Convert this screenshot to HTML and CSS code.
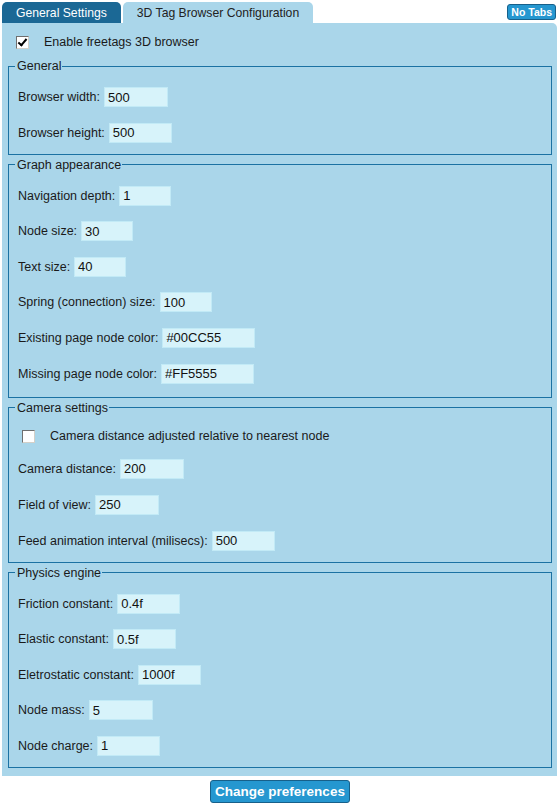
FILE: index.html
```html
<!DOCTYPE html>
<html lang="en">
<head>
    <meta charset="UTF-8">
    <title>Freetags - 3D Tag Browser Configuration</title>
    <link rel="stylesheet" href="styles.css">
</head>
<body>
    <!-- Tab bar -->
    <div class="tab-bar">
        <ul class="tabs">
            <li class="tab">General Settings</li>
            <li class="tab tab-active">3D Tag Browser Configuration</li>
        </ul>
        <button type="button" class="no-tabs">No Tabs</button>
    </div>

    <form class="prefs-form">
        <div class="panel">
            <div class="check-row">
                <input type="checkbox" id="enable-browser" checked>
                <label for="enable-browser">Enable freetags 3D browser</label>
            </div>

            <fieldset class="group">
                <legend>General</legend>
                <div class="row">
                    <label for="browser-width">Browser width:</label>
                    <input type="text" id="browser-width" class="field" value="500">
                </div>
                <div class="row">
                    <label for="browser-height">Browser height:</label>
                    <input type="text" id="browser-height" class="field field-62" value="500">
                </div>
            </fieldset>

            <fieldset class="group group-graph">
                <legend>Graph appearance</legend>
                <div class="row">
                    <label for="nav-depth">Navigation depth:</label>
                    <input type="text" id="nav-depth" class="field field-small" value="1">
                </div>
                <div class="row">
                    <label for="node-size">Node size:</label>
                    <input type="text" id="node-size" class="field field-small" value="30">
                </div>
                <div class="row">
                    <label for="text-size">Text size:</label>
                    <input type="text" id="text-size" class="field field-small" value="40">
                </div>
                <div class="row">
                    <label for="spring-size">Spring (connection) size:</label>
                    <input type="text" id="spring-size" class="field field-small" value="100">
                </div>
                <div class="row">
                    <label for="existing-color">Existing page node color:</label>
                    <input type="text" id="existing-color" class="field field-wide" value="#00CC55">
                </div>
                <div class="row">
                    <label for="missing-color">Missing page node color:</label>
                    <input type="text" id="missing-color" class="field field-wide" value="#FF5555">
                </div>
            </fieldset>

            <fieldset class="group group-camera">
                <legend>Camera settings</legend>
                <div class="check-row check-row-inner">
                    <input type="checkbox" id="camera-relative">
                    <label for="camera-relative">Camera distance adjusted relative to nearest node</label>
                </div>
                <div class="row">
                    <label for="camera-distance">Camera distance:</label>
                    <input type="text" id="camera-distance" class="field" value="200">
                </div>
                <div class="row">
                    <label for="field-of-view">Field of view:</label>
                    <input type="text" id="field-of-view" class="field" value="250">
                </div>
                <div class="row">
                    <label for="feed-interval">Feed animation interval (milisecs):</label>
                    <input type="text" id="feed-interval" class="field field-62" value="500">
                </div>
            </fieldset>

            <fieldset class="group group-last">
                <legend>Physics engine</legend>
                <div class="row">
                    <label for="friction">Friction constant:</label>
                    <input type="text" id="friction" class="field field-62" value="0.4f">
                </div>
                <div class="row">
                    <label for="elastic">Elastic constant:</label>
                    <input type="text" id="elastic" class="field field-62" value="0.5f">
                </div>
                <div class="row">
                    <label for="electrostatic">Eletrostatic constant:</label>
                    <input type="text" id="electrostatic" class="field field-62" value="1000f">
                </div>
                <div class="row">
                    <label for="node-mass">Node mass:</label>
                    <input type="text" id="node-mass" class="field" value="5">
                </div>
                <div class="row">
                    <label for="node-charge">Node charge:</label>
                    <input type="text" id="node-charge" class="field field-62" value="1">
                </div>
            </fieldset>
        </div>

        <div class="actions">
            <button type="submit" class="submit-btn">Change preferences</button>
        </div>
    </form>
</body>
</html>
```

FILE: styles.css
```css
/* Page */
body {
    margin: 0;
    font-family: "Liberation Sans", Arial, sans-serif;
    font-size: 12.5px;
    color: #1a1a1a;
    background: #fff;
}

/* Tab bar */
.tab-bar {
    display: flex;
    justify-content: space-between;
    align-items: flex-start;
    padding: 2px 4px 0 2px;
}

.tabs {
    display: flex;
    gap: 2px;
    margin: 0;
    padding: 0;
    list-style: none;
}

.tab {
    height: 21px;
    line-height: 22px;
    padding: 0 14px;
    border-radius: 5px 5px 0 0;
    background: #1b6895;
    color: #fff;
    font-size: 12.2px;
}

.tab-active {
    background: #aad6ea;
    color: #222;
}

.no-tabs {
    margin-top: 2px;
    height: 16px;
    padding: 0 3px;
    border: 1px solid #17608a;
    border-radius: 3px;
    background: #2597d0;
    color: #fff;
    font-family: "Liberation Sans", Arial, sans-serif;
    font-size: 10.5px;
    font-weight: bold;
    line-height: 13px;
}

/* Main panel */
.panel {
    margin: 0 3px 0 2px;
    padding: 12px 5px 8px 6px;
    background: #aad6ea;
    border-radius: 0 5px 0 0;
}

.check-row {
    display: flex;
    align-items: center;
    height: 14px;
    margin: 0 0 10px 8px;
}

.check-row input {
    appearance: none;
    position: relative;
    flex: none;
    width: 13px;
    height: 13px;
    margin: 0 15px 0 0;
    border: 1px solid #6f6f6f;
    border-right-color: #d4d0c8;
    border-bottom-color: #d4d0c8;
    background: #fff;
    box-sizing: border-box;
}

.check-row input:checked::after {
    content: "";
    position: absolute;
    left: 3px;
    top: 0px;
    width: 3px;
    height: 7px;
    border: solid #000;
    border-width: 0 2px 2px 0;
    transform: rotate(40deg);
}

.check-row-inner {
    height: 13px;
    margin: 10px 0 0 4px;
}

/* Fieldsets */
.group {
    margin: 0 0 3px;
    padding: 5px 9px 11px;
    border: 1px solid #1b72a3;
    display: flex;
    flex-direction: column;
    gap: 15.6px;
}

.group-graph {
    padding-bottom: 13px;
}

.group-camera {
    gap: 16px;
}

.group-last {
    margin-bottom: 0;
}

.group legend {
    padding: 0 1px 0 2px;
    margin-left: -3px;
    line-height: 14px;
}

.row {
    display: flex;
    align-items: center;
    gap: 4px;
    height: 20px;
}

.row:first-of-type {
    margin-top: 9px;
}

.field {
    width: 64px;
    height: 20px;
    box-sizing: border-box;
    padding: 0 3px;
    border: 1px solid #c2eaf6;
    background: #d7f3fa;
    font-family: "Liberation Sans", Arial, sans-serif;
    font-size: 13px;
    color: #111;
}

.field-62 {
    width: 63px;
}

.field-small {
    width: 52px;
}

.field-wide {
    width: 93px;
}

/* Submit */
.actions {
    display: flex;
    justify-content: center;
    padding-top: 4px;
}

.submit-btn {
    height: 23px;
    padding: 0 4px;
    border: 1px solid #17608a;
    border-radius: 3px;
    background: #2597d0;
    color: #fff;
    font-family: "Liberation Sans", Arial, sans-serif;
    font-size: 13.5px;
    font-weight: bold;
    cursor: pointer;
}
```
